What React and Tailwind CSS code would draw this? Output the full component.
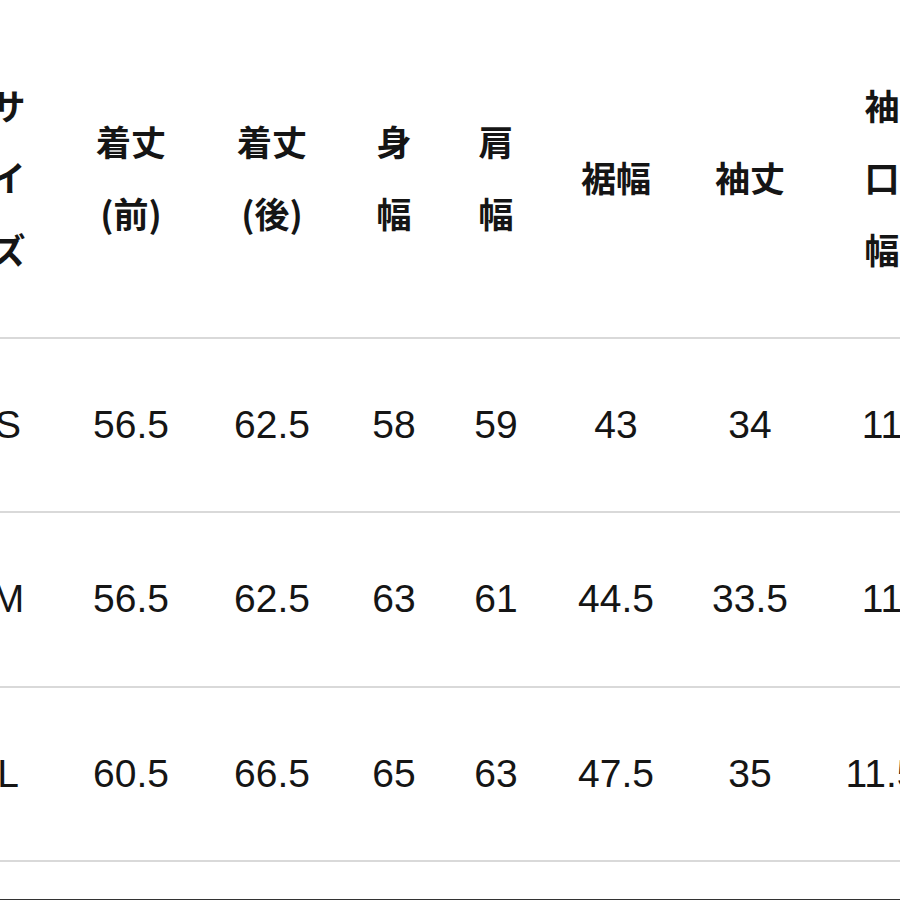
const widths = ['w-[124px]', 'w-[122px]', 'w-[160px]', 'w-[84px]', 'w-[120px]', 'w-[120px]', 'w-[148px]', 'w-[116px]']

const headers = [
  ['サ', 'イ', 'ズ'],
  ['着丈', '(前)'],
  ['着丈', '(後)'],
  ['身', '幅'],
  ['肩', '幅'],
  ['裾幅'],
  ['袖丈'],
  ['袖', '口', '幅'],
]

const rows = [
  { h: 'h-[174px]', cells: ['S', '56.5', '62.5', '58', '59', '43', '34', '11'] },
  { h: 'h-[175px]', cells: ['M', '56.5', '62.5', '63', '61', '44.5', '33.5', '11'] },
  { h: 'h-[174px]', cells: ['L', '60.5', '66.5', '65', '63', '47.5', '35', '11.5'] },
]

export default function App() {
  return (
    <div className="w-[900px] h-[900px] overflow-hidden bg-white text-[#151515]">
      <div className="ml-[-54px] w-[994px]">
        {/* header */}
        <div className="flex h-[337px] pt-[17px] items-center font-['Noto_Sans_CJK_JP',sans-serif] font-bold text-[35px] leading-[72px]">
          {headers.map((lines, i) => (
            <div key={i} className={`${widths[i]} shrink-0 flex flex-col items-center`}>
              {lines.map(t => (
                <span key={t} className="whitespace-nowrap">{t}</span>
              ))}
            </div>
          ))}
        </div>

        {/* rows */}
        {rows.map(r => (
          <div
            key={r.cells[0]}
            className={`flex ${r.h} items-center border-t-2 border-[#d9d9d9] font-['Liberation_Sans',Arial,sans-serif] text-[39px]`}
          >
            {r.cells.map((c, i) => (
              <div key={i} className={`${widths[i]} shrink-0 text-center whitespace-nowrap`}>{c}</div>
            ))}
          </div>
        ))}
        <div className="h-[39px] border-t-2 border-[#d9d9d9]" />
        <div className="h-px bg-[#333]" />
      </div>
    </div>
  )
}
